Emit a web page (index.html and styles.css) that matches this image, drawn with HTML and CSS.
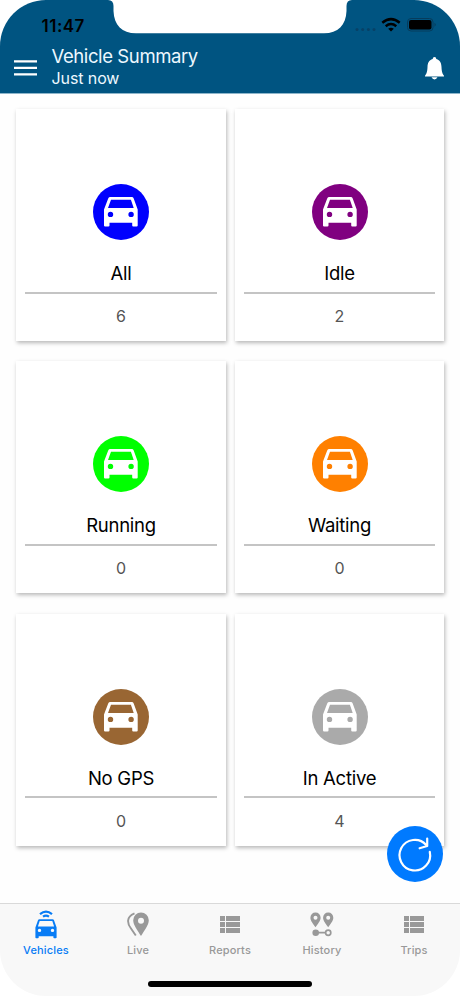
FILE: index.html
```
<!DOCTYPE html>
<html lang="en">
<head>
<meta charset="utf-8">
<title>Vehicle Summary</title>
<link rel="stylesheet" href="styles.css">
</head>
<body>
<svg class="defs" width="0" height="0" aria-hidden="true">
  <symbol id="car" viewBox="0 0 34 30">
    <path fill="currentColor" fill-rule="evenodd" d="M6.300 0H27.700Q29.200 0 29.700 1.400L33.700 12.500V28.500Q33.700 29.600 32.600 29.600H29.300Q28.200 29.600 28.200 28.500V25.700H5.500V28.500Q5.500 29.600 4.400 29.600H1.100Q0 29.600 0 28.500V12.500L4.200 1.400Q4.800 0 6.300 0ZM7 2.700L4 11H29.700L26.900 2.700ZM6.500 14.700a2.700 2.700 0 1 0 0 5.400a2.700 2.700 0 0 0 0-5.400ZM27.100 14.700a2.700 2.700 0 1 0 0 5.400a2.700 2.700 0 0 0 0-5.400Z"/>
  </symbol>
  <symbol id="list" viewBox="0 0 20 17">
    <path fill="currentColor" d="M0 0h5v5H0zM6 0h14v5H6zM0 6h5v5H0zM6 6h14v5H6zM0 12h5v5H0zM6 12h14v5H6z"/>
  </symbol>
</svg>
<div class="phone">
  <header class="header">
    <svg class="notch" width="244" height="34" viewBox="0 0 244 34" aria-hidden="true"><path fill="#fff" d="M0 0Q5.500 0 5.500 6V11C6 25 14 33.300 28 33.300H216C230 33.300 238 25 238.500 11V6Q238.500 0 244 0Z"/></svg>
    <div class="status">
      <span class="clock">11:47</span>
      <svg class="signals" width="84" height="16" viewBox="0 0 84 16" aria-hidden="true">
        <g fill="#074166"><circle cx="3" cy="12.500" r="1.500"/><circle cx="8.700" cy="12.500" r="1.500"/><circle cx="14.400" cy="12.500" r="1.500"/><circle cx="20" cy="12.500" r="1.500"/></g>
        <g fill="none" stroke="#000" stroke-width="2.500"><path d="M28.300 5.800Q37 -1.500 45.700 5.800"/><path d="M31.700 9.200Q37 4.900 42.300 9.200"/></g>
        <path d="M34.200 11.800Q37 9.500 39.800 11.800L37 14.500Z"/>
        <rect x="53.500" y="1.500" width="25.500" height="12.500" rx="3.500" fill="none" stroke="#063c5c"/>
        <rect x="55" y="3" width="22.500" height="9.500" rx="2"/><path fill="#063c5c" d="M80.500 5.800q2.500 2 0 4z"/>
      </svg>
    </div>
    <div class="bar">
      <svg class="menu" width="23" height="16" viewBox="0 0 23 16" aria-label="Menu"><path d="M0 1.300H23M0 7.800H23M0 14.300H23" stroke="#fff" stroke-width="2.200"/></svg>
      <div class="titles">
        <h1>Vehicle Summary</h1>
        <p>Just now</p>
      </div>
      <svg class="bell" width="19" height="23" viewBox="0 0 19 23" aria-label="Notifications"><path fill="#fff" d="M9.500 0Q11.300 0 11.300 2C15.200 3.200 16.300 6 16.500 10C16.700 15 17.500 17 19 18.800V19.500H0V18.800C1.500 17 2.300 15 2.500 10C2.700 6 3.800 3.200 7.700 2Q7.700 0 9.500 0ZM6.500 20.300H12.500Q11.500 22.400 9.500 22.400T6.500 20.300Z"/></svg>
    </div>
  </header>

  <main class="grid">
    <section class="card all"><div class="disc"><svg><use href="#car"/></svg></div><h2>All</h2><p>6</p></section>
    <section class="card idle"><div class="disc"><svg><use href="#car"/></svg></div><h2>Idle</h2><p>2</p></section>
    <section class="card running"><div class="disc"><svg><use href="#car"/></svg></div><h2>Running</h2><p>0</p></section>
    <section class="card waiting"><div class="disc"><svg><use href="#car"/></svg></div><h2>Waiting</h2><p>0</p></section>
    <section class="card nogps"><div class="disc"><svg><use href="#car"/></svg></div><h2>No GPS</h2><p>0</p></section>
    <section class="card inactive"><div class="disc"><svg><use href="#car"/></svg></div><h2>In Active</h2><p>4</p></section>
  </main>

  <button class="refresh" aria-label="Refresh">
    <svg width="56" height="56" viewBox="0 0 56 56" fill="none" stroke="#fff" stroke-width="2.200" stroke-linecap="round" stroke-linejoin="round"><path d="M42.800 25.900A15.300 15.300 0 1 1 39.200 18.900M40.200 12.600V20L32.600 22.300"/></svg>
  </button>

  <nav class="tabs">
    <div class="tab active">
      <svg width="22" height="30" viewBox="0 0 22 30"><g fill="none" stroke="currentColor" stroke-width="2.200"><path d="M5 4.200Q11 -.8 17 4.200"/><path d="M8 6.700Q11 4.700 14 6.700"/></g><path fill="currentColor" fill-rule="evenodd" d="M4.500 9.300H17.500Q18.700 9.300 19.100 10.400L21.600 17.500V27.500Q21.600 28.300 20.800 28.300H19.200Q18.400 28.300 18.400 27.500V26.200H3.700V27.500Q3.700 28.300 2.900 28.300H1.200Q.4 28.300 .4 27.500V17.500L2.900 10.400Q3.300 9.300 4.500 9.300ZM4.700 11.100L2.900 16.600H19.100L17.300 11.100ZM4.500 18.700a1.700 1.700 0 1 0 0 3.400a1.700 1.700 0 0 0 0-3.400ZM17.500 18.700a1.700 1.700 0 1 0 0 3.400a1.700 1.700 0 0 0 0-3.400Z"/></svg>
      <span>Vehicles</span>
    </div>
    <div class="tab">
      <svg width="22" height="30" viewBox="0 0 22 30"><path fill="currentColor" fill-rule="evenodd" d="M14 2.500A7.800 7.800 0 0 1 21.800 10.300C21.800 15 17.500 20.500 14 26C10.500 20.500 6.200 15 6.200 10.300A7.800 7.800 0 0 1 14 2.500ZM14 7.700a3 3 0 1 0 0 6a3 3 0 0 0 0-6Z"/><path fill="none" stroke="currentColor" stroke-width="1.900" d="M7.500 3.300C-1.500 7 .6 14 4 18.500L8.800 25.500"/></svg>
      <span>Live</span>
    </div>
    <div class="tab">
      <svg width="20" height="30"><use href="#list" y="6" width="20" height="17"/></svg>
      <span>Reports</span>
    </div>
    <div class="tab">
      <svg width="24" height="30" viewBox="0 0 24 30"><path fill="currentColor" fill-rule="evenodd" d="M5.500 2.600A5 5 0 0 1 10.600 7.700C10.600 11 8 13.500 5.500 17.300C3 13.500 .4 11 .4 7.700A5 5 0 0 1 5.500 2.600ZM5.500 5.800a2 2 0 1 0 0 4a2 2 0 0 0 0-4ZM18.200 2.600A5 5 0 0 1 23.300 7.700C23.300 11 20.700 13.500 18.200 17.300C15.700 13.500 13.100 11 13.100 7.700A5 5 0 0 1 18.200 2.600ZM18.200 5.800a2 2 0 1 0 0 4a2 2 0 0 0 0-4Z"/><circle cx="5.700" cy="22.700" r="3.300" fill="currentColor"/><g fill="none" stroke="currentColor" stroke-width="1.700"><path d="M8 22.700H15.500"/><circle cx="18.200" cy="22.700" r="2.600"/></g></svg>
      <span>History</span>
    </div>
    <div class="tab">
      <svg width="20" height="30"><use href="#list" y="6" width="20" height="17"/></svg>
      <span>Trips</span>
    </div>
    <i class="home"></i>
  </nav>
</div>
</body>
</html>
```
FILE: styles.css
```
* { box-sizing: border-box; }
body { margin: 0; background: #fff; font-family: Inter, "Liberation Sans", sans-serif; }
h1, h2, p { margin: 0; font-weight: 400; }
svg { display: block; flex: none; }
.defs { position: absolute; }
.phone {
  position: relative;
  display: flex;
  flex-direction: column;
  width: 460px;
  height: 996px;
  overflow: hidden;
  border-radius: 46px;
  background: #fefefe;
}
.header { position: relative; height: 94px; background: #005481; border-bottom: 1px solid #8db5ca; }
.notch { position: absolute; left: 108px; top: 0; }
.status { display: flex; justify-content: space-between; height: 42px; padding: 17px 22px 0 41.500px; }
.clock { font-size: 17px; font-weight: 600; line-height: 18px; letter-spacing: .5px; }
.bar { display: flex; align-items: center; height: 51px; padding: 0 16px 0 14px; }
.titles { flex: 1; padding: 0 0 2px 14.500px; color: #edf8ff; }
.titles h1 { font-size: 18.500px; line-height: 23px; letter-spacing: -.4px; }
.titles p { font-size: 16px; line-height: 21px; letter-spacing: -.1px; }
.bell { margin-top: 1px; }
.grid {
  flex: 1;
  display: grid;
  grid-template-columns: 210px 209px;
  grid-auto-rows: 232px;
  gap: 20.300px 9px;
  padding: 15.200px 16px 0;
}
.card {
  display: flex;
  flex-direction: column;
  align-items: center;
  padding: 75px 9px 0;
  background: #fff;
  box-shadow: 1px 2px 4px rgba(0, 0, 0, .28);
}
.disc { display: flex; align-items: center; justify-content: center; width: 56px; height: 56px; border-radius: 50%; color: #fff; }
.disc svg { width: 34px; height: 30px; }
.all .disc { background: #0000fe; }
.idle .disc { background: #800080; }
.running .disc { background: #00ff00; }
.waiting .disc { background: #ff8000; }
.nogps .disc { background: #996633; }
.inactive .disc { background: #aaa; }
.card h2 {
  align-self: stretch;
  height: 53.500px;
  padding-top: 20px;
  border-bottom: 2px solid #c4c4c4;
  color: #000;
  font-size: 18.500px;
  line-height: 26px;
  letter-spacing: -.25px;
  text-align: center;
}
.card p { padding-top: 12.500px; color: #555; font-size: 16px; line-height: 20px; }
.refresh {
  position: absolute;
  left: 386.500px;
  top: 825.500px;
  width: 56px;
  height: 56px;
  padding: 0;
  border: 0;
  border-radius: 50%;
  background: #007aff;
}
.tabs {
  position: relative;
  display: grid;
  grid-template-columns: repeat(5, 1fr);
  height: 93px;
  border-top: 1px solid #d9d9d9;
  background: #f8f8f8;
}
.tab { display: flex; flex-direction: column; align-items: center; padding-top: 6px; color: #999; font-size: 11px; font-weight: 500; line-height: 14px; letter-spacing: .15px; }
.tab span { margin-top: 3px; }
.tab.active { color: #087cf5; }
.home { position: absolute; left: 148px; bottom: 9px; width: 164px; height: 6px; border-radius: 3px; background: #000; }
```
